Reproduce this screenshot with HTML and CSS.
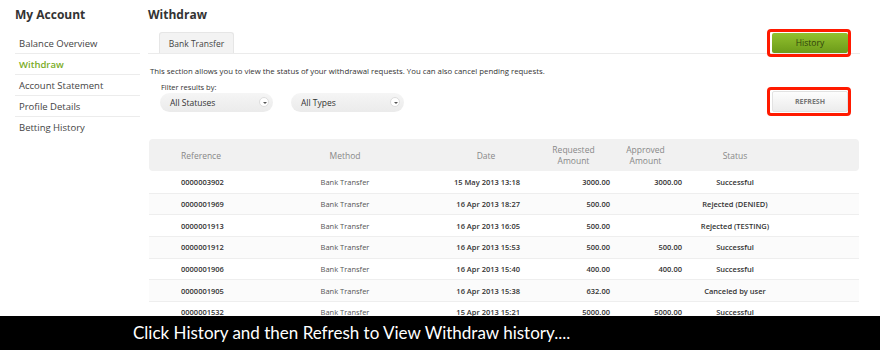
FILE: index.html
```html
<!DOCTYPE html>
<html lang="en">

<head>
    <meta charset="UTF-8">
    <title>Withdraw</title>
    <link rel="stylesheet" href="styles.css">
</head>

<body>
    <div class="sidebar">
        <h2>My Account</h2>
        <ul class="menu">
            <li>Balance Overview</li>
            <li class="active">Withdraw</li>
            <li>Account Statement</li>
            <li>Profile Details</li>
            <li>Betting History</li>
        </ul>
    </div>

    <div class="main">
        <h2>Withdraw</h2>
        <div class="tabs">
            <div class="tab">Bank Transfer</div>
            <div class="mark">
                <button class="btn-history">History</button>
            </div>
        </div>

        <p class="intro">This section allows you to view the status of your withdrawal requests. You can also cancel pending requests.</p>

        <div class="filters">
            <div class="filter-group">
                <label>Filter results by:</label>
                <div class="selects">
                    <div class="select">All Statuses<span class="arrow"></span></div>
                    <div class="select">All Types<span class="arrow"></span></div>
                </div>
            </div>
            <div class="mark">
                <button class="btn-refresh">REFRESH</button>
            </div>
        </div>

        <div class="table">
            <div class="row head">
                <div class="c-ref">Reference</div>
                <div class="c-method">Method</div>
                <div class="c-date">Date</div>
                <div class="c-req">Requested Amount</div>
                <div class="c-app">Approved Amount</div>
                <div class="c-status">Status</div>
            </div>
            <div class="row">
                <div class="c-ref">0000003902</div>
                <div class="c-method">Bank Transfer</div>
                <div class="c-date">15 May 2013 13:18</div>
                <div class="c-req">3000.00</div>
                <div class="c-app">3000.00</div>
                <div class="c-status">Successful</div>
            </div>
            <div class="row">
                <div class="c-ref">0000001969</div>
                <div class="c-method">Bank Transfer</div>
                <div class="c-date">16 Apr 2013 18:27</div>
                <div class="c-req">500.00</div>
                <div class="c-app"></div>
                <div class="c-status">Rejected (DENIED)</div>
            </div>
            <div class="row">
                <div class="c-ref">0000001913</div>
                <div class="c-method">Bank Transfer</div>
                <div class="c-date">16 Apr 2013 16:05</div>
                <div class="c-req">500.00</div>
                <div class="c-app"></div>
                <div class="c-status">Rejected (TESTING)</div>
            </div>
            <div class="row">
                <div class="c-ref">0000001912</div>
                <div class="c-method">Bank Transfer</div>
                <div class="c-date">16 Apr 2013 15:53</div>
                <div class="c-req">500.00</div>
                <div class="c-app">500.00</div>
                <div class="c-status">Successful</div>
            </div>
            <div class="row">
                <div class="c-ref">0000001906</div>
                <div class="c-method">Bank Transfer</div>
                <div class="c-date">16 Apr 2013 15:40</div>
                <div class="c-req">400.00</div>
                <div class="c-app">400.00</div>
                <div class="c-status">Successful</div>
            </div>
            <div class="row">
                <div class="c-ref">0000001905</div>
                <div class="c-method">Bank Transfer</div>
                <div class="c-date">16 Apr 2013 15:38</div>
                <div class="c-req">632.00</div>
                <div class="c-app"></div>
                <div class="c-status">Canceled by user</div>
            </div>
            <div class="row">
                <div class="c-ref">0000001532</div>
                <div class="c-method">Bank Transfer</div>
                <div class="c-date">15 Apr 2013 15:21</div>
                <div class="c-req">5000.00</div>
                <div class="c-app">5000.00</div>
                <div class="c-status">Successful</div>
            </div>
        </div>
    </div>

    <div class="caption">Click History and then Refresh to View Withdraw history....</div>
</body>

</html>
```

FILE: styles.css
```css
body {
    font-family: "Open Sans", Arial, sans-serif;
    background-color: #ffffff;
    color: #333333;
    margin: 0;
    padding: 0;
    display: flex;
    height: 350px;
    overflow: hidden;
}

h2 {
    margin: 0;
    font-size: 12px;
    font-weight: bold;
    color: #333333;
    line-height: 16px;
}

/* colonne de gauche */
.sidebar {
    width: 125px;
    padding: 7px 0 0 15px;
}

.menu {
    list-style: none;
    margin: 10px 0 0 0;
    padding: 0;
}

.menu li {
    height: 20px;
    line-height: 21px;
    padding-left: 4px;
    font-size: 9.5px;
    color: #444444;
    border-bottom: 1px solid #ececec;
}

.menu li:last-child {
    border-bottom: none;
}

.menu li.active {
    color: #7aac1f;
    font-weight: 600;
}

/* contenu principal */
.main {
    width: 712px;
    margin-left: 8px;
    padding-top: 7px;
}

.tabs {
    margin-top: 9px;
    display: flex;
    justify-content: space-between;
    align-items: flex-end;
    border-bottom: 1px solid #ebebeb;
    padding-left: 11px;
    padding-right: 9px;
    height: 21px;
}

.tab {
    width: 75px;
    height: 21px;
    line-height: 21px;
    text-align: center;
    font-size: 8.5px;
    color: #444444;
    background-color: #f3f3f3;
    border: 1px solid #e6e6e6;
    border-bottom: none;
    border-radius: 3px 3px 0 0;
    box-sizing: border-box;
}

.mark {
    border: 3px solid #ff1a00;
    border-radius: 4px;
    padding: 1px 0 1px 2px;
    align-self: center;
}

.btn-history {
    display: block;
    width: 76px;
    height: 20px;
    border: none;
    border-radius: 2px;
    background: linear-gradient(#92c12f, #6c9b19);
    color: #2e3f0c;
    font-family: "Open Sans", Arial, sans-serif;
    font-size: 8.5px;
    cursor: pointer;
}

.intro {
    margin: 12px 0 0 2px;
    font-size: 7.8px;
    color: #333333;
}

.filters {
    display: flex;
    justify-content: space-between;
    align-items: flex-start;
    margin-top: 6px;
    padding-right: 9px;
}

.filter-group {
    padding-left: 12px;
}

.filter-group label {
    display: block;
    font-size: 7.5px;
    color: #333333;
    line-height: 11px;
    padding-left: 1px;
}

.selects {
    display: flex;
    gap: 18px;
}

.select {
    position: relative;
    width: 113px;
    height: 19px;
    line-height: 19px;
    padding-left: 10px;
    box-sizing: border-box;
    border-radius: 10px;
    background: linear-gradient(#f5f5f5, #ebebeb);
    font-size: 8.5px;
    color: #333333;
}

.arrow {
    position: absolute;
    right: 4px;
    top: 4px;
    width: 10px;
    height: 10px;
    border-radius: 50%;
    background-color: #ffffff;
    border: 1px solid #dddddd;
    box-sizing: border-box;
}

.arrow::after {
    content: "";
    position: absolute;
    left: 2.5px;
    top: 3.5px;
    border-left: 2px solid transparent;
    border-right: 2px solid transparent;
    border-top: 2px solid #555555;
}

.filters .mark {
    margin-top: 5px;
    align-self: flex-start;
}

.btn-refresh {
    display: block;
    width: 76px;
    height: 21px;
    border: 1px solid #e2e2e2;
    border-radius: 2px;
    background: linear-gradient(#fdfdfd, #ececec);
    color: #777777;
    font-family: "Open Sans", Arial, sans-serif;
    font-weight: bold;
    font-size: 7px;
    cursor: pointer;
}

/* tableau */
.table {
    margin-top: 23px;
    width: 710px;
    margin-left: 1px;
}

.row {
    display: grid;
    grid-template-columns: 121px 150px 110px 85px 75px 90px 1fr;
    align-items: center;
    height: 21.67px;
    box-sizing: border-box;
    border-bottom: 1px solid #eeeeee;
    font-size: 7.5px;
    font-weight: 600;
    color: #333333;
}

.row:nth-child(odd) {
    background-color: #fbfbfb;
}

.row.head {
    height: 32px;
    background-color: #f1f1f1;
    border-radius: 4px;
    border-bottom: none;
    font-size: 8.5px;
    font-weight: normal;
    color: #888888;
    line-height: 11px;
    margin-bottom: 1px;
}

.c-ref {
    padding-left: 32px;
}

.c-method {
    text-align: center;
    font-weight: normal;
    color: #555555;
}

.c-date {
    text-align: right;
    padding-right: 10px;
}

.c-req {
    text-align: right;
    padding-right: 5px;
}

.c-app {
    text-align: right;
    padding-right: 8px;
}

.c-status {
    text-align: center;
}

.head .c-method {
    color: #888888;
}

.head .c-date {
    text-align: center;
    padding-left: 22px;
    padding-right: 0;
}

.head .c-req {
    text-align: center;
    padding: 0 18px 0 20px;
}

.head .c-app {
    text-align: center;
    padding-right: 14px;
}

/* bandeau du bas */
.caption {
    position: absolute;
    left: 0;
    bottom: 0;
    width: 880px;
    height: 34px;
    line-height: 34px;
    background-color: #000000;
    color: #ffffff;
    font-family: Lato, sans-serif;
    font-size: 17px;
    padding-left: 133px;
    box-sizing: border-box;
}
```
